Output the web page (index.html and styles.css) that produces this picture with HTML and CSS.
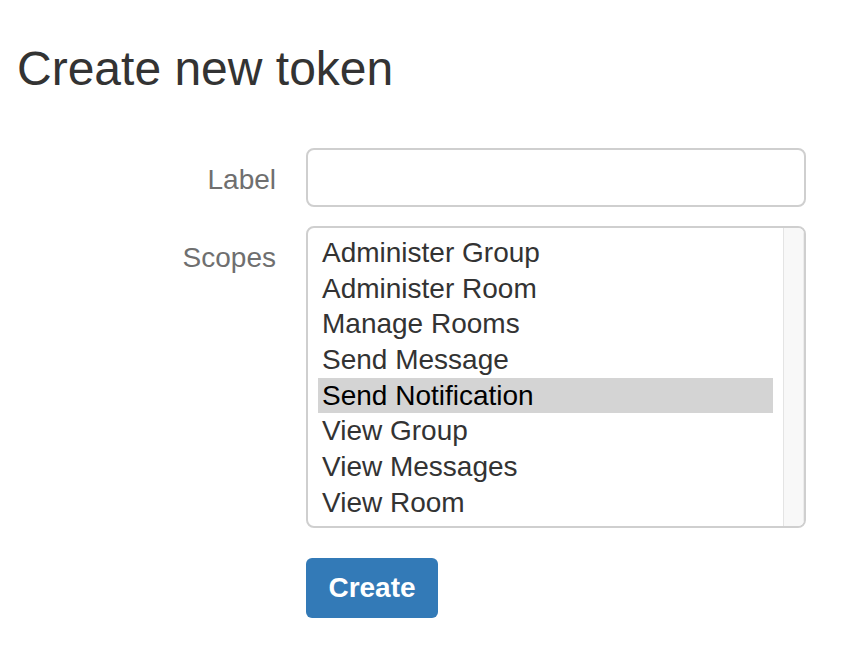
FILE: index.html
```
<!DOCTYPE html>
<html lang="en">
<head>
<meta charset="utf-8">
<title>Create new token</title>
<link rel="stylesheet" href="styles.css">
</head>
<body>
<div class="page">
  <h1 class="title">Create new token</h1>
  <form class="form">
    <label class="form-label" for="label">Label</label>
    <input class="text-input" id="label" type="text">
    <div class="form-label">Scopes</div>
    <div class="listbox">
      <ul class="options">
        <li class="option">Administer Group</li>
        <li class="option">Administer Room</li>
        <li class="option">Manage Rooms</li>
        <li class="option">Send Message</li>
        <li class="option selected">Send Notification</li>
        <li class="option">View Group</li>
        <li class="option">View Messages</li>
        <li class="option">View Room</li>
      </ul>
      <div class="track"></div>
    </div>
    <div class="actions">
      <button class="btn-primary" type="button">Create</button>
    </div>
  </form>
</div>
</body>
</html>
```
FILE: styles.css
```
* { box-sizing: border-box; }
html, body { margin: 0; background: #fff; }
body { font-family: "Liberation Sans", Arial, sans-serif; color: #333; }
.page { padding: 43px 0 0 17px; }
.title {
  margin: 0;
  font-size: 48px;
  line-height: 1.1;
  font-weight: 400;
  color: #333;
}
.form {
  margin-top: 52px;
  display: grid;
  grid-template-columns: 259px 500px;
  column-gap: 30px;
  row-gap: 19px;
  align-items: start;
}
.form-label {
  text-align: right;
  font-size: 28px;
  line-height: 40px;
  padding-top: 12px;
  color: #6f6f6f;
}
.text-input {
  display: block;
  width: 500px;
  height: 59px;
  margin: 0;
  border: 2px solid #cfcfcf;
  border-radius: 8px;
  background: #fff;
  font: inherit;
  outline: none;
}
.listbox {
  width: 500px;
  height: 302px;
  border: 2px solid #cfcfcf;
  border-radius: 8px;
  display: flex;
  overflow: hidden;
}
.options {
  flex: 1;
  list-style: none;
  margin: 0;
  padding: 7px 10px 0 10px;
}
.option {
  font-size: 28px;
  line-height: 35.7px;
  padding-left: 4px;
  color: #333;
  white-space: nowrap;
}
.option.selected { background: #d4d4d4; color: #000; }
.track {
  width: 21px;
  border-left: 1px solid #e4e4e4;
  border-right: 1px solid #ececec;
  background: #f8f8f8;
}
.actions { grid-column: 2; margin-top: 11px; }
.btn-primary {
  display: block;
  width: 132px;
  height: 60px;
  padding: 0;
  border: 0;
  border-radius: 6px;
  background: #337ab7;
  color: #fff;
  font-family: "Liberation Sans", Arial, sans-serif;
  font-weight: 700;
  font-size: 28px;
  cursor: pointer;
}
```
